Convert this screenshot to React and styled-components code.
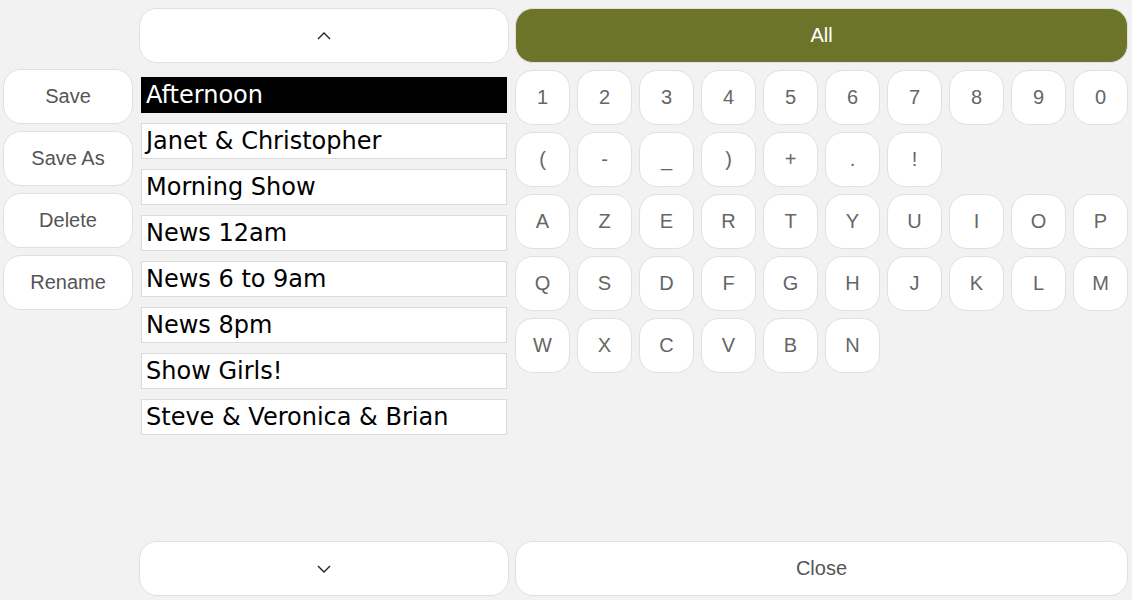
import React from "react";
import styled, { createGlobalStyle } from "styled-components";

const GlobalStyle = createGlobalStyle`
  html, body {
    margin: 0;
    padding: 0;
    background: #f2f2f2;
  }
  * {
    box-sizing: border-box;
  }
`;

const Screen = styled.div`
  width: 1132px;
  height: 600px;
  padding: 8px 4px 4px 3px;
  display: grid;
  grid-template-columns: 130px 370px 613px;
  grid-template-rows: 55px 1fr 55px;
  column-gap: 6px;
  row-gap: 6px;
  background: #f2f2f2;
  font-family: "Liberation Sans", Arial, sans-serif;
`;

const Button = styled.button`
  display: flex;
  align-items: center;
  justify-content: center;
  height: 55px;
  padding: 0;
  border: 1px solid #e0e0e0;
  border-radius: 18px;
  background: ${(p) => (p.$active ? "#6c742a" : "#fff")};
  color: ${(p) => (p.$active ? "#fff" : "#555")};
  font-family: "Liberation Sans", Arial, sans-serif;
  font-size: 20px;
  cursor: pointer;
`;

const Actions = styled.div`
  grid-column: 1;
  grid-row: 2;
  display: flex;
  flex-direction: column;
  gap: 7px;
`;

const List = styled.div`
  grid-column: 2;
  grid-row: 2;
  display: flex;
  flex-direction: column;
  gap: 10px;
  padding: 8px 2px 0;
`;

const Item = styled.div`
  height: 36px;
  padding: 0 4px;
  display: flex;
  align-items: center;
  border: 1px solid ${(p) => (p.$selected ? "#000" : "#dcdcdc")};
  background: ${(p) => (p.$selected ? "#000" : "#fff")};
  color: ${(p) => (p.$selected ? "#fff" : "#000")};
  font-family: "DejaVu Sans", Verdana, sans-serif;
  font-size: 24px;
  white-space: nowrap;
`;

const Keys = styled.div`
  grid-column: 3;
  grid-row: 2;
  display: grid;
  grid-template-columns: repeat(10, 55px);
  grid-auto-rows: 55px;
  gap: 7px;
  padding-top: 1px;
  align-content: start;
`;

const Key = styled(Button)`
  width: 55px;
  color: #666;
`;

const Chevron = ({ up }) => (
  <svg width="16" height="10" viewBox="0 0 16 10">
    <polyline
      points={up ? "2,8 8,2 14,8" : "2,2 8,8 14,2"}
      fill="none"
      stroke="#222"
      strokeWidth="1.4"
    />
  </svg>
);

const names = [
  "Afternoon",
  "Janet & Christopher",
  "Morning Show",
  "News 12am",
  "News 6 to 9am",
  "News 8pm",
  "Show Girls!",
  "Steve & Veronica & Brian",
];

const rows = [
  ["1", "2", "3", "4", "5", "6", "7", "8", "9", "0"],
  ["(", "-", "_", ")", "+", ".", "!"],
  ["A", "Z", "E", "R", "T", "Y", "U", "I", "O", "P"],
  ["Q", "S", "D", "F", "G", "H", "J", "K", "L", "M"],
  ["W", "X", "C", "V", "B", "N"],
];

export default function App() {
  return (
    <>
      <GlobalStyle />
      <Screen>
        <div />
        <Button style={{ gridColumn: 2 }}>
          <Chevron up />
        </Button>
        <Button $active>All</Button>

        <Actions>
          <Button>Save</Button>
          <Button>Save As</Button>
          <Button>Delete</Button>
          <Button>Rename</Button>
        </Actions>

        <List>
          {names.map((n, i) => (
            <Item key={n} $selected={i === 0}>
              {n}
            </Item>
          ))}
        </List>

        <Keys>
          {rows.map((row, r) =>
            Array.from({ length: 10 }).map((_, c) =>
              row[c] ? <Key key={r + "-" + c}>{row[c]}</Key> : <div key={r + "-" + c} />
            )
          )}
        </Keys>

        <div />
        <Button>
          <Chevron />
        </Button>
        <Button>Close</Button>
      </Screen>
    </>
  );
}
